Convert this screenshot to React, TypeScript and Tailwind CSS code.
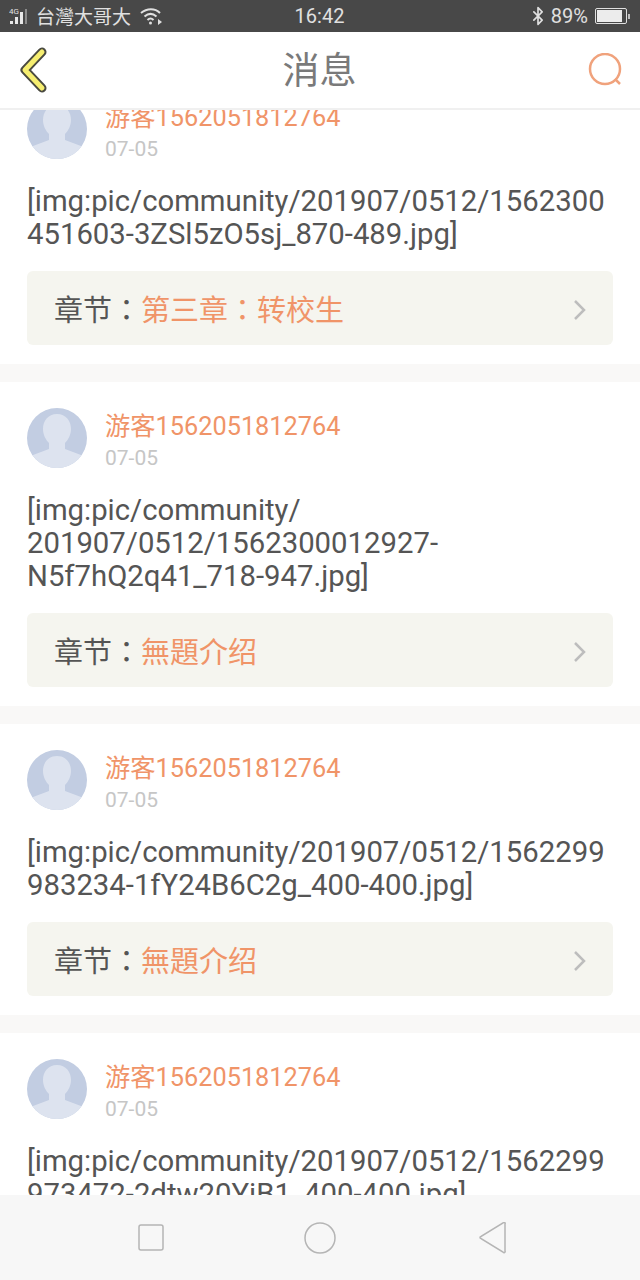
import { Bluetooth } from "lucide-react";

const FONT = "font-['Roboto','Noto_Sans_CJK_SC',sans-serif]";

const cards = [
  {
    lines: ["[img:pic/community/201907/0512/1562300", "451603-3ZSl5zO5sj_870-489.jpg]"],
    chapter: "第三章：转校生",
  },
  {
    lines: ["[img:pic/community/", "201907/0512/1562300012927-", "N5f7hQ2q41_718-947.jpg]"],
    chapter: "無題介绍",
  },
  {
    lines: ["[img:pic/community/201907/0512/1562299", "983234-1fY24B6C2g_400-400.jpg]"],
    chapter: "無題介绍",
  },
  {
    lines: ["[img:pic/community/201907/0512/1562299", "973472-2dtw20YiB1_400-400.jpg]"],
    chapter: "無題介绍",
  },
];

function Avatar() {
  return (
    <svg width="60" height="60" viewBox="0 0 60 60" className="shrink-0">
      <defs>
        <clipPath id="avatar-clip">
          <circle cx="30" cy="30" r="30" />
        </clipPath>
      </defs>
      <g clipPath="url(#avatar-clip)">
        <rect width="60" height="60" fill="#c2cde2" />
        <path
          d="M30 6c-9 0-14 7-14 15 0 6 3 11 6 14v6L6 47v13h48V47l-16-6v-6c3-3 6-8 6-14 0-8-5-15-14-15z"
          fill="#dde3ef"
        />
      </g>
    </svg>
  );
}

function Card({ lines, chapter }: { lines: string[]; chapter: string }) {
  return (
    <div className="bg-white px-[27px] pt-[26px] pb-[19px] mb-[18px]">
      <div className="flex gap-[18px]">
        <Avatar />
        <div className="pt-[2px] h-[64px]">
          <div className="text-[25.3px] leading-[34px] text-[#f09468]">游客1562051812764</div>
          <div className="text-[21px] leading-[30px] -mt-[1px] text-[#c6c6c6]">07-05</div>
        </div>
      </div>
      <div className="mt-[22px] text-[29.3px] leading-[33.2px] text-[#555555]">
        {lines.map((l) => (
          <div key={l} className="whitespace-nowrap">
            {l}
          </div>
        ))}
      </div>
      <div className="mt-[19.6px] h-[74px] rounded-[6px] bg-[#f5f5ef] pl-[27px] pr-[26px] pt-[2px] flex items-center justify-between">
        <div className="text-[29px] text-[#555555] font-['Noto_Sans_CJK_TC',sans-serif]">
          章节：<span className="text-[#f09468]">{chapter}</span>
        </div>
        <svg width="14" height="22" viewBox="0 0 14 22" fill="none" stroke="#bdbdbd" strokeWidth="2.5" className="mt-[2px]">
          <path d="M2 2l9 9-9 9" />
        </svg>
      </div>
    </div>
  );
}

export default function App() {
  return (
    <div className={`${FONT} w-[640px] h-[1280px] flex flex-col overflow-hidden bg-[#f9f8f7]`}>
      {/* status bar */}
      <div className="h-[32px] shrink-0 bg-[#484848] flex items-center justify-between pl-[9px] pr-[10px] text-[#e0e0e0]">
        <div className="flex items-center flex-1">
          <svg width="26" height="20" viewBox="0 0 26 20" className="shrink-0">
            <text x="0" y="8" fontSize="8" fill="#e0e0e0">
              4G
            </text>
            <rect x="1" y="15" width="3" height="3" fill="#e8e8e8" />
            <rect x="6" y="11" width="3" height="7" fill="#e8e8e8" />
            <rect x="11" y="6" width="3" height="12" fill="#e8e8e8" />
            <rect x="16" y="3" width="2" height="15" fill="#8a8a8a" />
          </svg>
          <span className="text-[19px] ml-[1px] font-['Noto_Sans_CJK_TC',sans-serif]">台灣大哥大</span>
          <svg width="26" height="20" viewBox="0 0 26 20" fill="none" stroke="#e0e0e0" strokeWidth="2" className="ml-[8px]">
            <path d="M2 7c6-5 14-5 19 0" />
            <path d="M5.5 10.5c4-3.5 8-3.5 12 0" />
            <path d="M8.5 14c2-2 4-2 6 0" />
            <circle cx="11.5" cy="17" r="1.5" fill="#e0e0e0" stroke="none" />
            <path d="M19 13v6l4-3z" fill="#e0e0e0" stroke="none" />
          </svg>
        </div>
        <div className="text-[20px] w-[60px] text-center">16:42</div>
        <div className="flex items-center justify-end flex-1">
          <Bluetooth size={20} strokeWidth={2} className="text-[#e0e0e0]" />
          <span className="text-[20px] ml-[3px]">89%</span>
          <div className="ml-[7px] w-[32px] h-[16px] border border-[#e0e0e0] rounded-[2px] p-[1px]">
            <div className="h-full w-[88%] bg-[#ececec]" />
          </div>
          <div className="w-[2px] h-[5px] bg-[#c0c0c0] ml-[1px]" />
        </div>
      </div>

      {/* header */}
      <div className="h-[78px] shrink-0 bg-white border-b-2 border-[#f0f0f0] flex items-center justify-between pl-[18px] pr-[17px] relative z-10">
        <svg width="30" height="46" viewBox="0 0 30 46" fill="none">
          <path d="M24 5L7 23l17 18" stroke="#4a4a40" strokeWidth="9" strokeLinecap="round" strokeLinejoin="round" />
          <path d="M24 5L7 23l17 18" stroke="#f6ee70" strokeWidth="5" strokeLinecap="round" strokeLinejoin="round" />
        </svg>
        <div className="text-[37px] ml-[4px] pt-[3px] text-[#7a7a7a]">消息</div>
        <svg width="36" height="34" viewBox="0 0 36 34" fill="none" stroke="#f0a27c" strokeWidth="2.5">
          <circle cx="18" cy="16" r="15" />
          <path d="M28 26l5 5" />
        </svg>
      </div>

      {/* message list */}
      <div className="flex-1 min-h-0 overflow-hidden">
        <div className="-mt-[37px]">
          {cards.map((c) => (
            <Card key={c.lines[0] + c.lines[1]} lines={c.lines} chapter={c.chapter} />
          ))}
        </div>
      </div>

      {/* nav bar */}
      <div className="h-[85px] shrink-0 bg-[#f7f7f7] flex items-start pt-[27px] pl-[138px] relative z-10">
        <svg width="26" height="32" viewBox="0 0 26 32" fill="none" stroke="#b5b5b5" strokeWidth="1.5">
          <rect x="1" y="3" width="24" height="25" rx="2" />
        </svg>
        <svg width="32" height="32" viewBox="0 0 32 32" fill="none" stroke="#b5b5b5" strokeWidth="1.5" className="ml-[140px]">
          <circle cx="16" cy="16" r="15" />
        </svg>
        <svg width="28" height="32" viewBox="0 0 28 32" fill="none" stroke="#b5b5b5" strokeWidth="1.5" className="ml-[143px]">
          <path d="M26 2v27a1 1 0 0 1-2 1L2 16.5a1 1 0 0 1 0-2L24 1a1 1 0 0 1 2 1z" />
        </svg>
      </div>
    </div>
  );
}
